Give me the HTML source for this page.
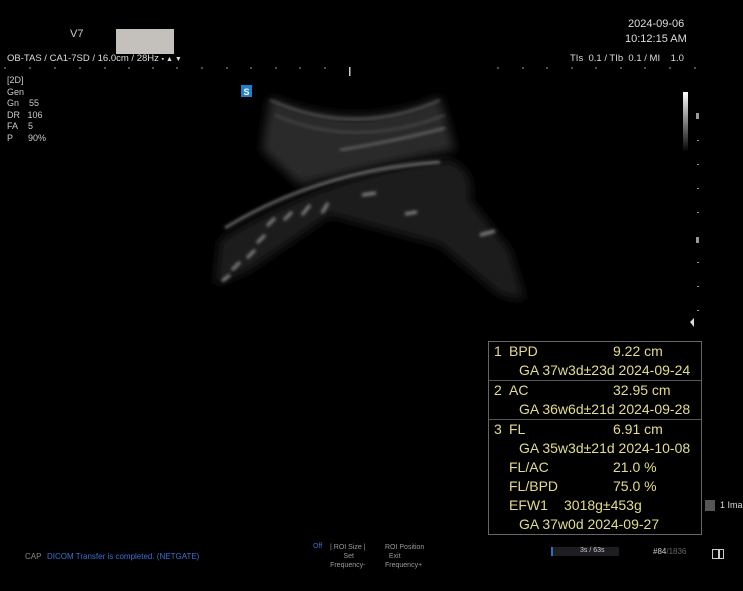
<!DOCTYPE html>
<html><head><style>
body{margin:0;width:743px;height:591px;background:#000;overflow:hidden;position:relative;font-family:"Liberation Sans",sans-serif;color:#ddd}
.a{position:absolute;white-space:nowrap}
.s{font-size:9px;color:#ccc;line-height:11.5px}
#box{position:absolute;left:488px;top:341px;width:212px;height:192px;border:1px solid #666;color:#e3dc8c;font-size:14px}
#box div{height:19px;line-height:19px;position:relative}
#box span{position:absolute}
.sep{border-top:1px solid #555}
</style></head><body>
<div class="a" style="left:70px;top:28px;font-size:11px;color:#ccc">V7</div>
<div class="a" style="left:116px;top:29px;width:58px;height:25px;background:#c4c1bd"></div>
<div class="a" style="left:7px;top:53px;font-size:9.5px;color:#ddd">OB-TAS / CA1-7SD / 16.0cm / 28Hz <span style="font-size:7px">▪ ▲ ▼</span></div>
<div class="a" style="left:628px;top:18px;font-size:11px;color:#ddd">2024-09-06</div>
<div class="a" style="left:625px;top:33px;font-size:11px;color:#ddd">10:12:15 AM</div>
<div class="a" style="left:570px;top:53px;font-size:9.5px;color:#ddd">TIs &nbsp;0.1 / TIb &nbsp;0.1 / MI &nbsp;&nbsp;&nbsp;1.0</div>
<svg class="a" style="left:0;top:0" width="743" height="591">
<g fill="#aaa"><circle cx="5" cy="68" r="0.8"/><circle cx="30" cy="68" r="0.8"/><circle cx="55" cy="68" r="0.8"/><circle cx="80" cy="68" r="0.8"/><circle cx="105" cy="68" r="0.8"/><circle cx="129" cy="68" r="0.8"/><circle cx="153" cy="68" r="0.8"/><circle cx="177" cy="68" r="0.8"/><circle cx="202" cy="68" r="0.8"/><circle cx="227" cy="68" r="0.8"/><circle cx="251" cy="68" r="0.8"/><circle cx="276" cy="68" r="0.8"/><circle cx="300" cy="68" r="0.8"/><circle cx="325" cy="68" r="0.8"/><circle cx="498" cy="68" r="0.8"/><circle cx="523" cy="68" r="0.8"/><circle cx="547" cy="68" r="0.8"/><circle cx="572" cy="68" r="0.8"/><circle cx="596" cy="68" r="0.8"/><circle cx="621" cy="68" r="0.8"/><circle cx="645" cy="68" r="0.8"/><circle cx="670" cy="68" r="0.8"/><circle cx="695" cy="68" r="0.8"/></g>
<rect x="349" y="67" width="1.5" height="9" fill="#ccc"/>
<defs><linearGradient id="sc" x1="0" y1="0" x2="0" y2="1"><stop offset="0" stop-color="#fff"/><stop offset="1" stop-color="#000"/></linearGradient>
<filter id="b"><feGaussianBlur stdDeviation="5"/></filter><filter id="b2"><feGaussianBlur stdDeviation="1.5"/></filter></defs>
<rect x="683" y="92" width="5" height="60" fill="url(#sc)"/>
<g fill="#999"><rect x="696" y="113" width="3" height="6"/><rect x="697" y="140" width="2" height="1"/><rect x="697" y="164" width="2" height="1"/><rect x="697" y="188" width="2" height="1"/><rect x="697" y="212" width="2" height="1"/><rect x="696" y="237" width="3" height="6"/><rect x="697" y="262" width="2" height="1"/><rect x="697" y="286" width="2" height="1"/><rect x="697" y="310" width="2" height="1"/></g>
<polygon points="690,322 694,318 694,327" fill="#ddd"/>
<rect x="241" y="85" width="11" height="12" fill="#1f7fc8"/>
<text x="243.5" y="95" font-size="9" fill="#fff" font-family="Liberation Sans" font-weight="bold">S</text>
<path d="M270 97 Q355 135 440 97 L455 150 Q380 165 300 185 L262 150 Z" fill="#2c2c2c" filter="url(#b)"/>
<path d="M270 100 Q355 138 440 100" stroke="#777" stroke-width="1.5" fill="none" filter="url(#b2)"/>
<path d="M275 115 Q355 150 445 115" stroke="#555" stroke-width="1.5" fill="none" filter="url(#b2)"/>
<path d="M340 150 Q400 140 445 128" stroke="#888" stroke-width="1.5" fill="none" filter="url(#b2)"/>
<path d="M220 240 Q330 170 450 160 Q475 170 470 200 L510 250 L525 300 L500 295 L440 245 L330 215 L250 270 L215 285 Z" fill="#1c1c1c" filter="url(#b)"/>
<path d="M225 228 Q320 170 440 162" stroke="#999" stroke-width="2" fill="none" filter="url(#b2)"/>
<g stroke="#888" stroke-width="3" fill="none" filter="url(#b2)"><path d="M275 218 l-8 8"/><path d="M292 212 l-8 8"/><path d="M310 205 l-8 10"/><path d="M328 203 l-6 10"/><path d="M265 235 l-8 8"/><path d="M255 250 l-8 8"/><path d="M240 262 l-8 8"/><path d="M230 275 l-8 6"/><path d="M362 195 l14 -2"/><path d="M405 214 l12 -2"/><path d="M480 235 l15 -4"/></g>
</svg>
<div class="a s" style="left:7px;top:75px">[2D]<br>Gen<br>Gn&nbsp;&nbsp;&nbsp; 55<br>DR&nbsp;&nbsp;&nbsp;106<br>FA&nbsp;&nbsp;&nbsp; 5<br>P&nbsp;&nbsp;&nbsp;&nbsp;&nbsp; 90%</div>
<div id="box">
<div><span style="left:5px">1</span><span style="left:20px">BPD</span><span style="left:124px">9.22 cm</span></div>
<div><span style="left:30px">GA 37w3d±23d 2024-09-24</span></div>
<div class="sep"><span style="left:5px">2</span><span style="left:20px">AC</span><span style="left:124px">32.95 cm</span></div>
<div><span style="left:30px">GA 36w6d±21d 2024-09-28</span></div>
<div class="sep"><span style="left:5px">3</span><span style="left:20px">FL</span><span style="left:124px">6.91 cm</span></div>
<div><span style="left:30px">GA 35w3d±21d 2024-10-08</span></div>
<div><span style="left:20px">FL/AC</span><span style="left:124px">21.0 %</span></div>
<div><span style="left:20px">FL/BPD</span><span style="left:124px">75.0 %</span></div>
<div><span style="left:20px">EFW1</span><span style="left:75px">3018g±453g</span></div>
<div><span style="left:30px">GA 37w0d 2024-09-27</span></div>
</div>
<div class="a" style="left:705px;top:500px;width:10px;height:11px;background:#555"></div>
<div class="a" style="left:720px;top:500px;font-size:9px;color:#ddd">1 Ima</div>
<div class="a" style="left:25px;top:552px;font-size:8px;color:#888">CAP</div>
<div class="a" style="left:47px;top:552px;font-size:8px;color:#3a6fd0">DICOM Transfer is completed. (NETGATE)</div>
<div class="a" style="left:313px;top:543px;font-size:7px;color:#3a6fd0">Off</div>
<div class="a" style="left:330px;top:543px;font-size:7px;color:#999;line-height:9px;text-align:center">| ROI Size |<br>&nbsp;Set<br>Frequency-</div>
<div class="a" style="left:385px;top:543px;font-size:7px;color:#999;line-height:9px">ROI Position<br>&nbsp;&nbsp;Exit<br>Frequency+</div>
<div class="a" style="left:551px;top:547px;width:66px;height:9px;background:#1e1e22;border-left:2px solid #2b6fc8"></div>
<div class="a" style="left:580px;top:547px;font-size:7px;color:#ccc">3s / 63s</div>
<div class="a" style="left:653px;top:547px;font-size:8px;color:#ccc">#84<span style="color:#666">/1836</span></div>
<div class="a" style="left:712px;top:549px;width:12px;height:10px;border:1.5px solid #ccc;box-sizing:border-box"></div>
<div class="a" style="left:718px;top:549px;width:1.5px;height:10px;background:#ccc"></div>
</body></html>
